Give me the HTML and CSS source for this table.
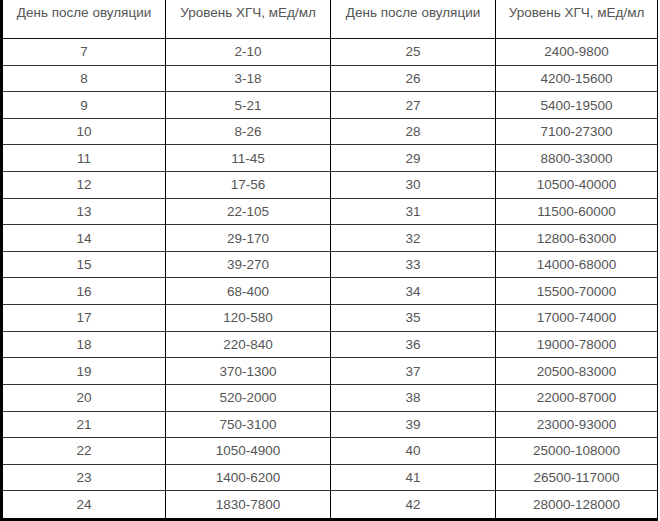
FILE: index.html
```html
<!DOCTYPE html>
<html lang="ru">
<head>
<meta charset="utf-8">
<link rel="stylesheet" href="styles.css">
</head>
<body>
<div class="table">
  <div class="cell head">День после овуляции</div>
  <div class="cell head">Уровень ХГЧ, мЕд/мл</div>
  <div class="cell head">День после овуляции</div>
  <div class="cell head">Уровень ХГЧ, мЕд/мл</div>

  <div class="cell">7</div><div class="cell">2-10</div><div class="cell">25</div><div class="cell">2400-9800</div>
  <div class="cell">8</div><div class="cell">3-18</div><div class="cell">26</div><div class="cell">4200-15600</div>
  <div class="cell">9</div><div class="cell">5-21</div><div class="cell">27</div><div class="cell">5400-19500</div>
  <div class="cell">10</div><div class="cell">8-26</div><div class="cell">28</div><div class="cell">7100-27300</div>
  <div class="cell">11</div><div class="cell">11-45</div><div class="cell">29</div><div class="cell">8800-33000</div>
  <div class="cell">12</div><div class="cell">17-56</div><div class="cell">30</div><div class="cell">10500-40000</div>
  <div class="cell">13</div><div class="cell">22-105</div><div class="cell">31</div><div class="cell">11500-60000</div>
  <div class="cell">14</div><div class="cell">29-170</div><div class="cell">32</div><div class="cell">12800-63000</div>
  <div class="cell">15</div><div class="cell">39-270</div><div class="cell">33</div><div class="cell">14000-68000</div>
  <div class="cell">16</div><div class="cell">68-400</div><div class="cell">34</div><div class="cell">15500-70000</div>
  <div class="cell">17</div><div class="cell">120-580</div><div class="cell">35</div><div class="cell">17000-74000</div>
  <div class="cell">18</div><div class="cell">220-840</div><div class="cell">36</div><div class="cell">19000-78000</div>
  <div class="cell">19</div><div class="cell">370-1300</div><div class="cell">37</div><div class="cell">20500-83000</div>
  <div class="cell">20</div><div class="cell">520-2000</div><div class="cell">38</div><div class="cell">22000-87000</div>
  <div class="cell">21</div><div class="cell">750-3100</div><div class="cell">39</div><div class="cell">23000-93000</div>
  <div class="cell">22</div><div class="cell">1050-4900</div><div class="cell">40</div><div class="cell">25000-108000</div>
  <div class="cell">23</div><div class="cell">1400-6200</div><div class="cell">41</div><div class="cell">26500-117000</div>
  <div class="cell last">24</div><div class="cell last">1830-7800</div><div class="cell last">42</div><div class="cell last">28000-128000</div>
</div>
</body>
</html>
```
FILE: styles.css
```css
html, body {
  margin: 0;
  padding: 0;
  background: #fff;
}

.table {
  box-sizing: border-box;
  width: 658px;
  height: 521px;
  border-left: 3px solid #000;
  border-bottom: 3px solid #000;
  display: grid;
  grid-template-columns: 163px 165px 165px 162px;
  grid-template-rows: 39px repeat(18, 1fr);
  font-family: "Liberation Sans", Arial, sans-serif;
  font-size: 13.5px;
  color: #555;
}

.cell {
  box-sizing: border-box;
  border-right: 1px solid #000;
  border-bottom: 1px solid #333;
  display: flex;
  align-items: center;
  justify-content: center;
  white-space: nowrap;
}

.cell.head {
  align-items: flex-start;
  padding-top: 5px;
  border-bottom-color: #111;
}

.cell.last {
  border-bottom: none;
}
```
